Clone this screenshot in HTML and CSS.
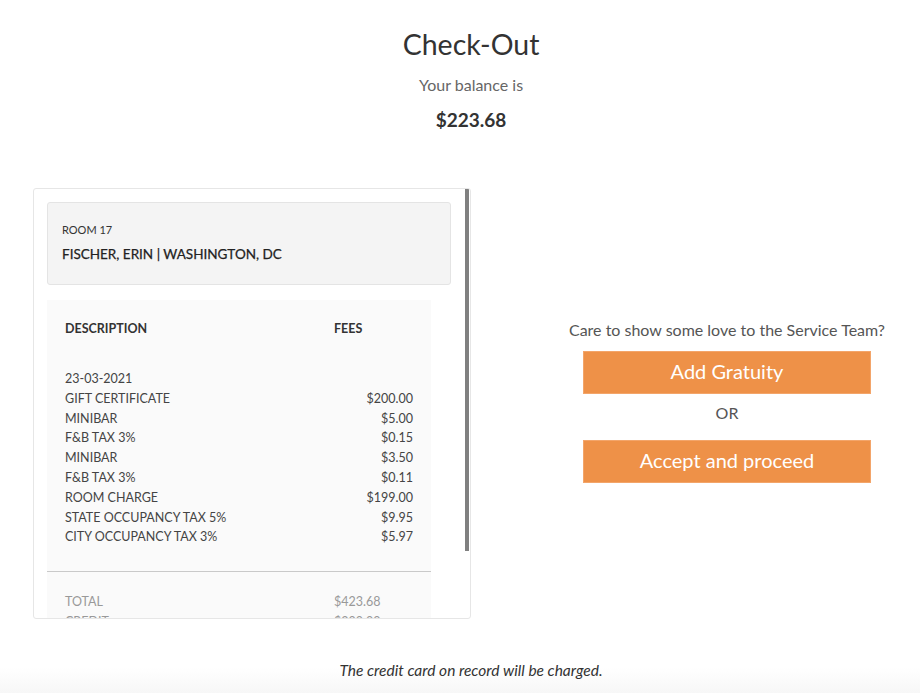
FILE: index.html
```html
<!DOCTYPE html>
<html lang="en">
<head>
<meta charset="utf-8">
<title>Check-Out</title>
<link rel="stylesheet" href="styles.css">
</head>
<body>
<header class="summary">
  <h1 class="title">Check-Out</h1>
  <p class="balance-label">Your balance is</p>
  <p class="balance-amount">$223.68</p>
</header>

<main class="layout">
  <section class="folio">
    <div class="folio-scroll">
      <div class="guest">
        <div class="guest-room">ROOM 17</div>
        <div class="guest-name">FISCHER, ERIN | WASHINGTON, DC</div>
      </div>
      <div class="charges">
        <div class="charges-head">
          <span class="col-desc">DESCRIPTION</span>
          <span class="col-fee">FEES</span>
        </div>
        <div class="charges-list">
          <div class="row"><span class="col-desc">23-03-2021</span><span class="col-fee"></span></div>
          <div class="row"><span class="col-desc">GIFT CERTIFICATE</span><span class="col-fee amt">$200.00</span></div>
          <div class="row"><span class="col-desc">MINIBAR</span><span class="col-fee amt">$5.00</span></div>
          <div class="row"><span class="col-desc">F&amp;B TAX 3%</span><span class="col-fee amt">$0.15</span></div>
          <div class="row"><span class="col-desc">MINIBAR</span><span class="col-fee amt">$3.50</span></div>
          <div class="row"><span class="col-desc">F&amp;B TAX 3%</span><span class="col-fee amt">$0.11</span></div>
          <div class="row"><span class="col-desc">ROOM CHARGE</span><span class="col-fee amt">$199.00</span></div>
          <div class="row"><span class="col-desc">STATE OCCUPANCY TAX 5%</span><span class="col-fee amt">$9.95</span></div>
          <div class="row"><span class="col-desc">CITY OCCUPANCY TAX 3%</span><span class="col-fee amt">$5.97</span></div>
        </div>
        <div class="totals">
          <div class="row"><span class="col-desc">TOTAL</span><span class="col-fee">$423.68</span></div>
          <div class="row"><span class="col-desc">CREDIT</span><span class="col-fee">$200.00</span></div>
          <div class="row"><span class="col-desc">BALANCE</span><span class="col-fee">$223.68</span></div>
        </div>
      </div>
    </div>
    <div class="scroll-thumb"></div>
  </section>

  <section class="actions">
    <p class="actions-prompt">Care to show some love to the Service Team?</p>
    <button class="btn" type="button">Add Gratuity</button>
    <p class="actions-or">OR</p>
    <button class="btn" type="button">Accept and proceed</button>
  </section>
</main>

<footer class="notice">
  <p class="notice-text">The credit card on record will be charged.</p>
</footer>
</body>
</html>
```

FILE: styles.css
```css
* { box-sizing: border-box; }

html, body {
  margin: 0;
  padding: 0;
  background: #ffffff;
  font-family: Lato, "Open Sans", "Liberation Sans", sans-serif;
  color: #333;
  overflow: hidden;
  height: 693px;
}

.summary {
  text-align: center;
  padding-top: 28px;
  padding-left: 22px;
}

.title {
  margin: 0;
  font-size: 28.5px;
  line-height: 32px;
  font-weight: 400;
  color: #333;
}

.balance-label {
  margin: 15px 0 0;
  font-size: 16px;
  line-height: 20px;
  color: #666;
}

.balance-amount {
  margin: 13px 0 0;
  font-size: 19px;
  line-height: 24px;
  font-weight: 700;
  color: #333;
}

.layout {
  display: grid;
  grid-template-columns: 438px 1fr;
  column-gap: 63px;
  padding-left: 33px;
  margin-top: 56px;
}

.folio {
  position: relative;
  height: 431px;
  border: 1px solid #e6e6e6;
  border-radius: 3px;
  overflow: hidden;
  background: #fff;
}

.folio-scroll {
  padding: 13px 19px 13px 13px;
}

.scroll-thumb {
  position: absolute;
  top: 0;
  right: 1px;
  width: 4px;
  height: 362px;
  background: #808080;
}

.guest {
  background: #f4f4f4;
  border: 1px solid #e4e4e4;
  border-radius: 3px;
  padding: 18px 14px 20px;
}

.guest-room {
  font-size: 11px;
  line-height: 18px;
  color: #333;
}

.guest-name {
  margin-top: 5px;
  font-size: 13.5px;
  line-height: 20px;
  font-weight: 400;
  color: #222;
  -webkit-text-stroke: 0.25px #222;
}

.charges {
  width: 384px;
  margin-top: 15px;
  background: #fafafa;
  padding-bottom: 38px;
}

.charges-head,
.row {
  display: flex;
  padding: 0 18px;
}

.col-desc { width: 269px; }
.col-fee { width: 79px; }
.amt { text-align: right; }

.charges-head {
  padding-top: 19px;
  font-size: 12.5px;
  line-height: 20px;
  font-weight: 700;
  color: #333;
}

.charges-list {
  margin-top: 30px;
  padding-bottom: 24px;
  border-bottom: 1px solid #c9c9c9;
}

.row {
  font-size: 12.5px;
  line-height: 19.8px;
  color: #444;
}

.totals {
  padding-top: 20px;
}

.totals .row {
  color: #999;
}

.actions {
  margin-top: 132px;
  display: flex;
  flex-direction: column;
  align-items: center;
}

.actions-prompt {
  margin: 0;
  font-size: 16px;
  line-height: 20px;
  color: #555;
}

.btn {
  margin-top: 11px;
  width: 288px;
  height: 43px;
  background: #ee9148;
  border: 1px solid #f3a56a;
  color: #fff;
  font-family: inherit;
  font-size: 20px;
  line-height: 24px;
  padding: 0 0 3px;
  cursor: pointer;
}

.actions-or {
  margin: 9px 0 0;
  font-size: 16px;
  line-height: 20px;
  color: #555;
}

.actions-or + .btn {
  margin-top: 17px;
}

.notice {
  height: 74px;
  padding-top: 41px;
  padding-left: 22px;
  text-align: center;
  background: linear-gradient(to bottom, #ffffff 65%, #f7f7f7 100%);
}

.notice-text {
  margin: 0;
  font-size: 15.5px;
  line-height: 20px;
  font-style: italic;
  color: #333;
}
```
